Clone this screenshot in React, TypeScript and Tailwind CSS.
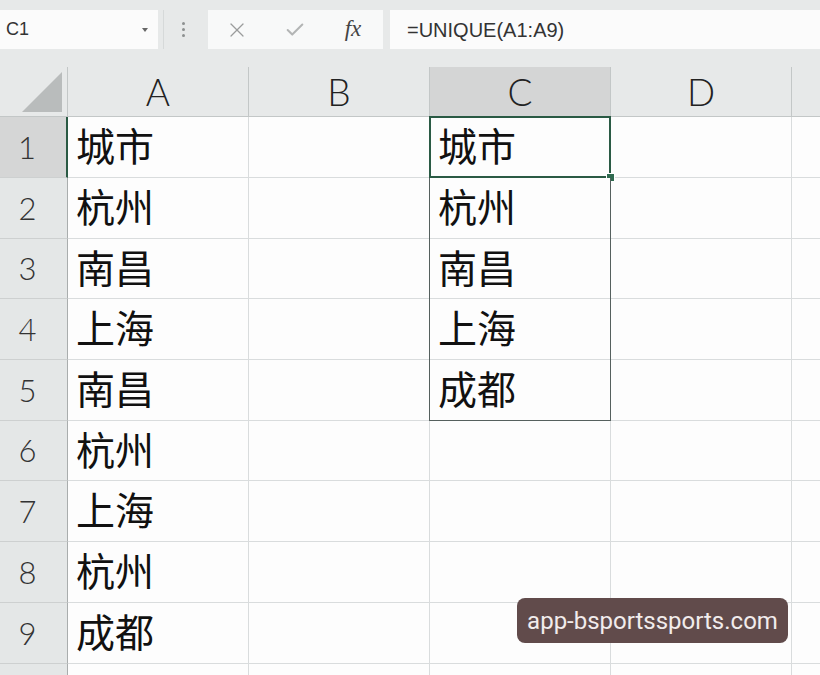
import { X, Check } from "lucide-react";

const rows = [
  { n: "1", a: "城市", c: "城市", h: "h-[61px]" },
  { n: "2", a: "杭州", c: "杭州", h: "h-[61px]" },
  { n: "3", a: "南昌", c: "南昌", h: "h-[60px]" },
  { n: "4", a: "上海", c: "上海", h: "h-[61px]" },
  { n: "5", a: "南昌", c: "成都", h: "h-[61px]" },
  { n: "6", a: "杭州", c: "", h: "h-[60px]" },
  { n: "7", a: "上海", c: "", h: "h-[61px]" },
  { n: "8", a: "杭州", c: "", h: "h-[61px]" },
  { n: "9", a: "成都", c: "", h: "h-[61px]" },
  { n: "", a: "", c: "", h: "h-[61px]" },
];

const cjk = { fontFamily: "'Noto Sans CJK SC', 'Noto Sans', sans-serif" };
const thin = { fontFamily: "Lato, 'Liberation Sans', sans-serif" };
const ui = { fontFamily: "'Liberation Sans', Arial, sans-serif" };

const App = () => {
  return (
    <div className="relative w-[820px] h-[675px] overflow-hidden bg-[#e7e9e9]">
      {/* Formula bar */}
      <div className="flex h-[67px] items-start pt-[10px]" style={ui}>
        <div className="flex w-[158px] h-[39px] items-center justify-between bg-[#fbfbfb] pl-[6px] pr-[10px]">
          <span className="text-[18px] text-[#333]">C1</span>
          <span className="h-0 w-0 border-x-[3.5px] border-t-[4px] border-x-transparent border-t-[#666]" />
        </div>
        <div className="ml-[5px] h-[39px] w-px bg-[#d6d9d9]" />
        <div className="flex w-[44px] h-[39px] flex-col justify-center gap-[3px] pl-[18px]">
          <span className="h-[3px] w-[3px] rounded-full bg-[#8d9090]" />
          <span className="h-[3px] w-[3px] rounded-full bg-[#8d9090]" />
          <span className="h-[3px] w-[3px] rounded-full bg-[#8d9090]" />
        </div>
        <div className="flex w-[175px] h-[39px] items-center bg-[#f8f9f9]">
          <div className="flex w-[58px] justify-center">
            <X className="h-[24px] w-[24px] text-[#9a9c9c]" strokeWidth={1.2} />
          </div>
          <div className="flex w-[58px] justify-center">
            <Check className="h-[22px] w-[22px] text-[#b3b5b5]" strokeWidth={2.2} />
          </div>
          <div className="flex w-[58px] justify-center">
            <span className="text-[23px] italic text-[#444]" style={{ fontFamily: "'Liberation Serif', serif" }}>
              fx
            </span>
          </div>
        </div>
        <div className="ml-[7px] flex flex-1 h-[39px] items-center bg-[#fbfbfb] pl-[17px]">
          <span className="text-[20px] text-[#333]">=UNIQUE(A1:A9)</span>
        </div>
      </div>

      {/* Column headers */}
      <div className="flex h-[50px] border-b border-[#c3c7c7] text-[#222]" style={thin}>
        <div className="flex w-[68px] shrink-0 items-end justify-end border-r border-[#c3c7c7] pb-[4px] pr-[5px]">
          <svg width="40" height="40">
            <polygon points="40,0 40,40 0,40" fill="#b9bcbc" />
          </svg>
        </div>
        {["A", "B", "C", "D"].map((l) => (
          <div
            key={l}
            className={
              l === "C"
                ? "flex w-[181px] shrink-0 items-center justify-center border-r border-[#c3c7c7] bg-[#d4d5d5] text-[37px] font-light"
                : "flex w-[181px] shrink-0 items-center justify-center border-r border-[#c3c7c7] text-[37px] font-light"
            }
          >
            {l}
          </div>
        ))}
        <div className="flex-1" />
      </div>

      {/* Grid */}
      <div className="flex flex-col">
        {rows.map((r, i) => (
          <div key={i} className={`flex ${r.h}`}>
            <div
              className={
                r.n === "1"
                  ? "flex w-[68px] shrink-0 items-center justify-center border-b border-r-2 border-b-[#cdd0d0] border-r-[#2a5a44] bg-[#d5d6d6] pr-[12px] text-[31px] font-light text-[#333]"
                  : "flex w-[68px] shrink-0 items-center justify-center border-b border-r border-b-[#cdd0d0] border-r-[#a9adad] bg-[#e4e7e7] pr-[12px] text-[31px] font-light text-[#333]"
              }
              style={thin}
            >
              {r.n}
            </div>
            <div className="flex w-[181px] shrink-0 items-center border-b border-r border-[#d9dcdd] bg-[#fdfdfd] pb-[5px] pl-[8px] text-[39px] text-[#111]" style={cjk}>
              {r.a}
            </div>
            <div className="w-[181px] shrink-0 border-b border-r border-[#d9dcdd] bg-[#fdfdfd]" />
            <div className="relative flex w-[181px] shrink-0 items-center border-b border-r border-[#d9dcdd] bg-[#fdfdfd] pb-[5px] pl-[8px] text-[39px] text-[#111]" style={cjk}>
              {r.c}
              {r.n === "1" && (
                <>
                  <div className="pointer-events-none absolute -left-[1px] -top-[1px] bottom-[-1px] right-[-1px] border-2 border-[#2a5a44]" />
                  <div className="absolute -bottom-[4px] -right-[4px] h-[7px] w-[7px] bg-[#2f6a4f] ring-1 ring-white" />
                </>
              )}
              {["2", "3", "4", "5"].includes(r.n) && (
                <div
                  className={
                    r.n === "5"
                      ? "pointer-events-none absolute -left-[1px] top-0 bottom-[-1px] right-[-1px] border-x border-b border-[#55605e]"
                      : "pointer-events-none absolute -left-[1px] top-0 bottom-[-1px] right-[-1px] border-x border-[#55605e]"
                  }
                />
              )}
            </div>
            <div className="w-[181px] shrink-0 border-b border-r border-[#d9dcdd] bg-[#fdfdfd]" />
            <div className="flex-1 border-b border-[#d9dcdd] bg-[#fdfdfd]" />
          </div>
        ))}
      </div>

      {/* Watermark */}
      <div className="absolute bottom-[32px] right-[32px] flex h-[45px] w-[271px] items-center justify-center rounded-[8px] bg-[#614b4b]">
        <span className="text-[24px] text-[#f1ecec]" style={{ fontFamily: "Roboto, 'Liberation Sans', sans-serif" }}>
          app-bsportssports.com
        </span>
      </div>
    </div>
  );
};

export default App;
